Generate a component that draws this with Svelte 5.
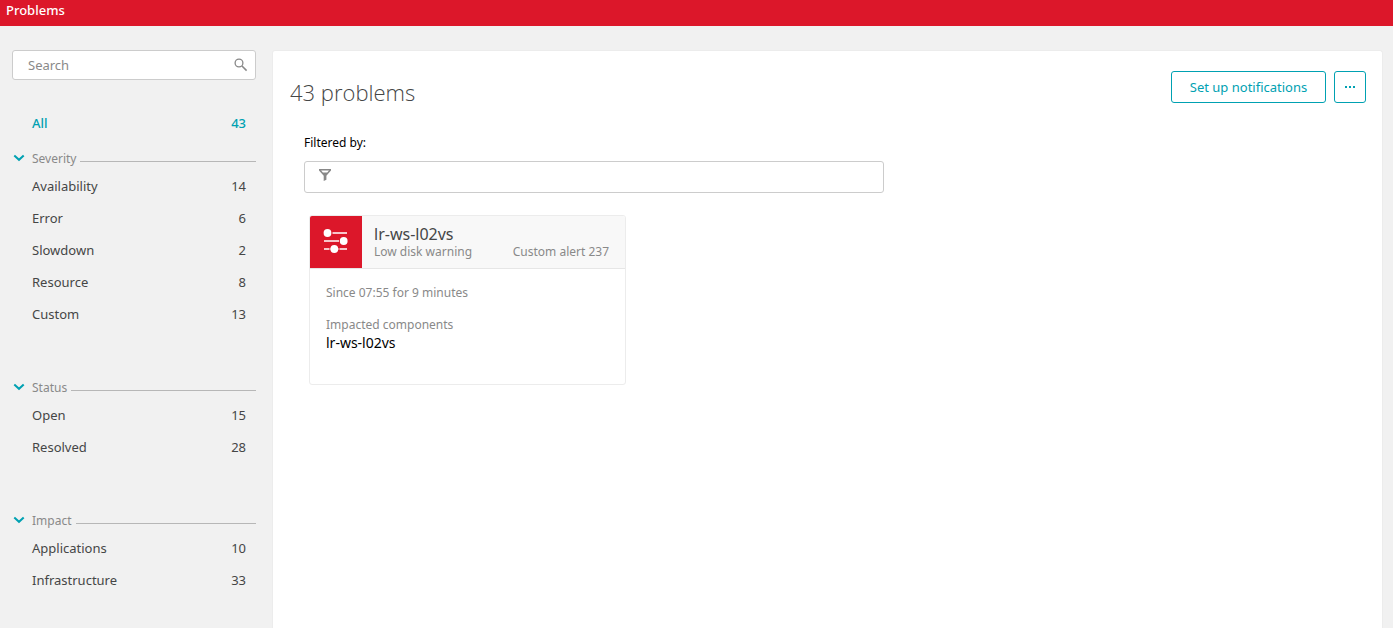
<script>
    let search = $state("");
    let filter = $state("");

    let groups = $state([
        {
            name: "Severity",
            open: true,
            items: [
                { label: "Availability", count: 14 },
                { label: "Error", count: 6 },
                { label: "Slowdown", count: 2 },
                { label: "Resource", count: 8 },
                { label: "Custom", count: 13 },
            ],
        },
        {
            name: "Status",
            open: true,
            items: [
                { label: "Open", count: 15 },
                { label: "Resolved", count: 28 },
            ],
        },
        {
            name: "Impact",
            open: true,
            items: [
                { label: "Applications", count: 10 },
                { label: "Infrastructure", count: 33 },
            ],
        },
    ]);

    const total = 43;

    const problems = [
        {
            host: "lr-ws-l02vs",
            title: "Low disk warning",
            alert: "Custom alert 237",
            since: "Since 07:55 for 9 minutes",
            components: ["lr-ws-l02vs"],
        },
    ];
</script>

<header class="topbar">Problems</header>

<div class="page">
    <aside class="sidebar">
        <label class="search">
            <input type="text" placeholder="Search" aria-label="Search" bind:value={search} />
            <svg width="14" height="14" viewBox="0 0 14 14" aria-hidden="true">
                <circle cx="5" cy="5" r="3.9" fill="none" stroke="#888" stroke-width="1.3" />
                <path d="M8 8L12.6 12.6" stroke="#888" stroke-width="1.6" />
            </svg>
        </label>

        <a class="row all" href="#all">
            <span>All</span>
            <span>{total}</span>
        </a>

        <nav class="groups">
            {#each groups as group}
                <section>
                    <button
                        class="group-header"
                        aria-expanded={group.open}
                        onclick={() => (group.open = !group.open)}
                    >
                        <svg class:closed={!group.open} width="12" height="8" viewBox="0 0 12 8" aria-hidden="true">
                            <path d="M1.3 1.5L6 5.8L10.7 1.5" fill="none" stroke="#00a1b2" stroke-width="2" />
                        </svg>
                        <span>{group.name}</span>
                        <i class="rule"></i>
                    </button>
                    {#if group.open}
                        {#each group.items as item}
                            <a class="row" href="#{item.label.toLowerCase()}">
                                <span>{item.label}</span>
                                <span>{item.count}</span>
                            </a>
                        {/each}
                    {/if}
                </section>
            {/each}
        </nav>
    </aside>

    <main class="panel">
        <div class="panel-header">
            <h1>{total} problems</h1>
            <div class="actions">
                <button class="btn wide">Set up notifications</button>
                <button class="btn more" aria-label="More actions">
                    <svg width="10" height="2" viewBox="0 0 10 2" aria-hidden="true">
                        <path d="M0 0h2v2h-2zM4 0h2v2h-2zM8 0h2v2h-2z" fill="#00a1b2" />
                    </svg>
                </button>
            </div>
        </div>

        <div class="filter">
            <label for="filter">Filtered by:</label>
            <div class="filter-box">
                <svg width="12" height="12" viewBox="0 0 12 12" aria-hidden="true">
                    <path
                        fill="#888"
                        fill-rule="evenodd"
                        d="M0 0H12V1.6L7.4 6.8V10.8L4.7 12V6.8L0 1.6ZM2.1 1.4L3.9 3.4H8.2L10 1.4Z"
                    />
                </svg>
                <input id="filter" type="text" bind:value={filter} />
            </div>
        </div>

        <div class="cards">
            {#each problems as problem}
                <article class="card">
                    <div class="card-header">
                        <div class="card-icon">
                            <svg width="26" height="26" viewBox="0 0 26 26" aria-hidden="true">
                                <path d="M1 4H24M1 12H24M1 20H24" stroke="#fff" stroke-width="1.6" />
                                <path
                                    d="M8 4H9.5M16 12H17M6.5 20H7.5M15.5 20H16.5"
                                    stroke="#dc172a"
                                    stroke-width="2"
                                />
                                <circle cx="4.5" cy="4" r="3.9" fill="#fff" />
                                <circle cx="20.7" cy="12" r="3.9" fill="#fff" />
                                <circle cx="11.3" cy="20" r="3.9" fill="#fff" />
                            </svg>
                        </div>
                        <div class="card-title">
                            <h2>{problem.host}</h2>
                            <div class="card-sub">
                                <span>{problem.title}</span>
                                <span>{problem.alert}</span>
                            </div>
                        </div>
                    </div>
                    <div class="card-body">
                        <p class="since">{problem.since}</p>
                        <p>Impacted components</p>
                        {#each problem.components as component}
                            <p class="component">{component}</p>
                        {/each}
                    </div>
                </article>
            {/each}
        </div>
    </main>
</div>

<style>
    :global(body) {
        background: #f1f1f1;
        color: #454646;
        font-family: "Noto Sans", "Open Sans", sans-serif;
        font-size: 13px;
    }

    :global(#app) {
        display: flex;
        flex-direction: column;
        min-height: 100vh;
    }

    input,
    button {
        font: inherit;
        color: inherit;
    }

    input {
        flex: 1;
        min-width: 0;
        padding: 0;
        border: 0;
        outline: 0;
        background: none;
    }

    a {
        color: inherit;
        text-decoration: none;
    }

    .topbar {
        padding: 0 6px 6px;
        background: #dc172a;
        color: #fff;
        font-weight: 500;
        line-height: 20px;
    }

    .page {
        flex: 1;
        display: flex;
        gap: 16px;
        padding: 24px 10px 0 12px;
    }

    .sidebar {
        flex: none;
        width: 244px;
    }

    .search {
        display: flex;
        align-items: center;
        box-sizing: border-box;
        height: 30px;
        margin-bottom: 27px;
        padding: 0 7px 0 15px;
        border: 1px solid #ccc;
        border-radius: 3px;
        background: #fff;
    }

    .search input::placeholder {
        color: #898989;
        opacity: 1;
    }

    .row {
        display: flex;
        justify-content: space-between;
        padding: 0 10px 0 20px;
        line-height: 32px;
    }

    .all {
        margin-bottom: 7px;
        color: #00a1b2;
        font-weight: 500;
    }

    .groups {
        display: flex;
        flex-direction: column;
        gap: 45px;
    }

    .group-header {
        display: flex;
        align-items: center;
        width: 100%;
        height: 24px;
        padding: 0 0 0 1px;
        border: 0;
        background: none;
        color: #898989;
        font-size: 12px;
        text-align: left;
        cursor: pointer;
    }

    .group-header span {
        margin: 0 4px 0 7px;
    }

    .closed {
        transform: rotate(-90deg);
    }

    .rule {
        flex: 1;
        height: 7px;
        border-bottom: 1px solid #b7b7b7;
    }

    .panel {
        flex: 1;
        min-width: 0;
        border: 1px solid #ececec;
        border-bottom: 0;
        border-radius: 3px 3px 0 0;
        background: #fff;
    }

    .panel-header {
        display: flex;
        justify-content: space-between;
        padding: 20px 16px 0 17px;
    }

    h1,
    h2,
    p {
        margin: 0;
        font-weight: 400;
    }

    h1 {
        padding-top: 5px;
        font-family: "Open Sans", "Noto Sans", sans-serif;
        font-size: 22px;
        font-weight: 300;
        line-height: 32px;
    }

    .actions {
        display: flex;
        gap: 8px;
    }

    .btn {
        display: flex;
        align-items: center;
        justify-content: center;
        height: 32px;
        padding: 0;
        border: 1px solid #00a1b2;
        border-radius: 3px;
        background: #fff;
        color: #00a1b2;
        cursor: pointer;
    }

    .wide {
        width: 155px;
    }

    .more {
        width: 32px;
    }

    .filter {
        max-width: 580px;
        padding: 25px 31px 0;
        color: #000;
    }

    .filter label {
        display: block;
        font-size: 12px;
        line-height: 20px;
    }

    .filter-box {
        display: flex;
        align-items: center;
        gap: 10px;
        box-sizing: border-box;
        height: 32px;
        margin-top: 8px;
        padding: 0 14px 4px;
        border: 1px solid #ccc;
        border-radius: 3px;
    }

    .cards {
        display: grid;
        grid-template-columns: repeat(auto-fill, 317px);
        gap: 16px;
        padding: 22px 36px;
    }

    .card {
        overflow: hidden;
        border: 1px solid #ececec;
        border-radius: 3px;
    }

    .card-header {
        display: flex;
        border-bottom: 1px solid #e6e6e6;
        background: #f8f8f8;
    }

    .card-icon {
        display: flex;
        align-items: center;
        justify-content: center;
        width: 52px;
        height: 52px;
        background: #dc172a;
    }

    .card-title {
        flex: 1;
        padding: 8px 16px 0 12px;
    }

    h2 {
        font-size: 16px;
        line-height: 20px;
    }

    .card-sub {
        display: flex;
        justify-content: space-between;
        color: #898989;
        font-size: 12px;
        line-height: 16px;
    }

    .card-body {
        padding: 16px 16px 31px;
        color: #898989;
        font-size: 12px;
        line-height: 16px;
    }

    .since {
        margin-bottom: 16px;
    }

    .component {
        color: #000;
        font-size: 14px;
        line-height: 20px;
    }
</style>
